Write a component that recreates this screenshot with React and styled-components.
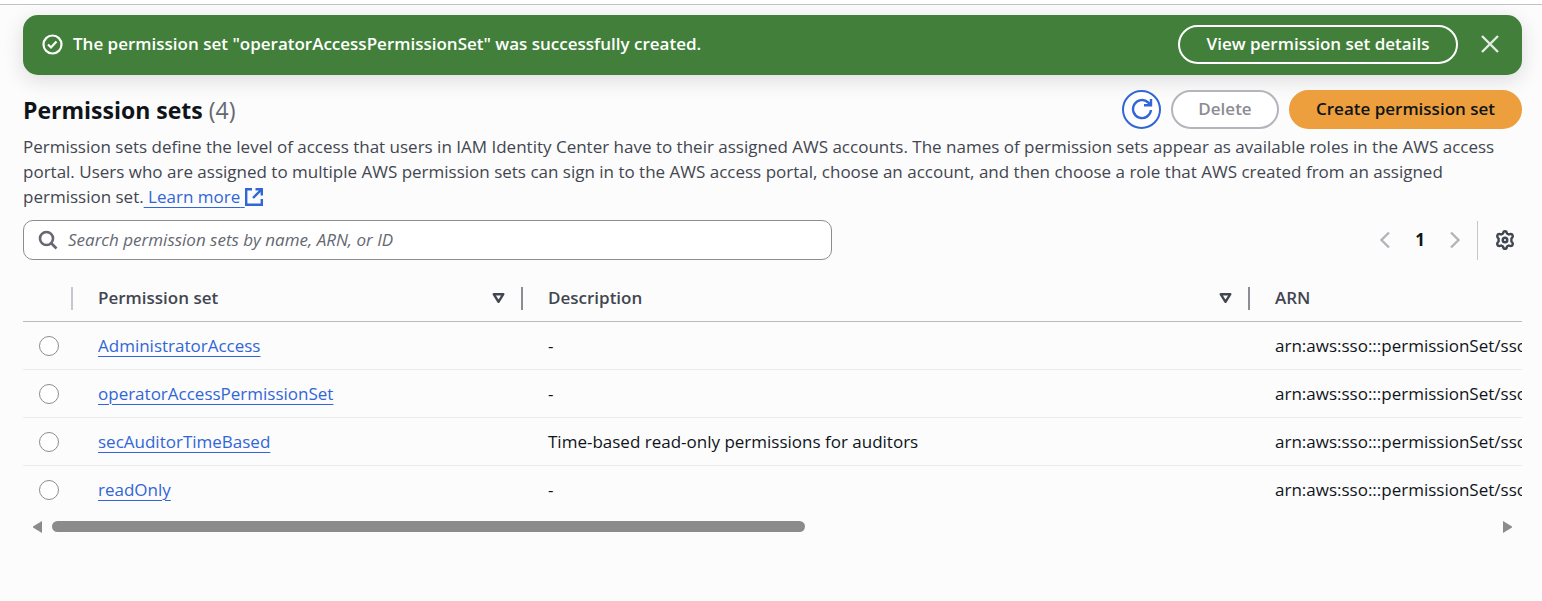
import React, { useState } from "react";
import styled, { createGlobalStyle } from "styled-components";

const GlobalStyle = createGlobalStyle`
  *, *::before, *::after { box-sizing: border-box; }
  body {
    margin: 0;
    background: #fcfcfc;
    color: #0f141a;
    font: 400 17px/24px "Open Sans", "Noto Sans", sans-serif;
  }
  button, input { font: inherit; }
`;

const TopEdge = styled.div`
  height: 5px;
  background: #ffffff;
  border-bottom: 1px solid #c2c2ca;
`;

const Page = styled.main`
  padding: 10px 20px 24px 23px;
`;

const Flashbar = styled.section`
  display: flex;
  align-items: center;
  gap: 10px;
  height: 60px;
  padding: 0 19px 2px;
  border-radius: 15px;
  background: #427f3a;
  color: #ffffff;
  font-weight: 600;
  box-shadow: 0 5px 20px 1px rgba(0, 7, 22, 0.12);
`;

const FlashText = styled.p`
  flex: 1;
  margin: 0;
`;

const Button = styled.button`
  height: 39px;
  width: ${(p) => p.$width}px;
  padding: 0 0 1px;
  border: 2px solid ${(p) => p.$border};
  border-radius: 20px;
  background: ${(p) => p.$fill || "transparent"};
  color: ${(p) => p.$color};
  font-weight: 600;
  line-height: 24px;
  white-space: nowrap;
  display: flex;
  align-items: center;
  justify-content: center;
`;

const IconButton = styled.button`
  display: flex;
  align-items: center;
  justify-content: center;
  width: ${(p) => p.$width || 26}px;
  height: 26px;
  padding: 0;
  border: 0;
  background: transparent;
  color: ${(p) => p.$color};
`;

const CloseSlot = styled.div`
  padding-left: 9px;
`;

const Header = styled.header`
  display: flex;
  align-items: center;
  justify-content: space-between;
  margin-top: 15px;
`;

const Title = styled.h2`
  margin: 0;
  font-size: 23px;
  line-height: 30px;
  font-weight: 700;
`;

const Counter = styled.span`
  color: #656871;
  font-weight: 400;
`;

const Actions = styled.div`
  display: flex;
  gap: 10px;
`;

const Description = styled.p`
  margin: 5px 0 0;
  line-height: 25px;
  color: #424650;
`;

const Link = styled.a`
  color: #3166d6;
  text-decoration: underline;
  text-decoration-thickness: 1px;
  text-underline-offset: 4px;
`;

const ExternalIcon = styled.svg`
  vertical-align: -3px;
`;

const Toolbar = styled.div`
  display: flex;
  align-items: center;
  justify-content: space-between;
  margin-top: 11px;
`;

const SearchBox = styled.label`
  display: flex;
  align-items: center;
  gap: 10px;
  width: 54%;
  height: 40px;
  padding: 0 14px;
  border: 1px solid #8c8c94;
  border-radius: 10px;
  background: #ffffff;
  color: #656871;
`;

const SearchInput = styled.input`
  flex: 1;
  min-width: 0;
  padding: 0;
  border: 0;
  outline: 0;
  background: transparent;
  &::placeholder {
    color: #656871;
    font-style: italic;
    opacity: 1;
  }
`;

const Paging = styled.div`
  display: flex;
  align-items: center;
  height: 39px;
`;

const PageNumber = styled.button`
  width: 44px;
  padding: 0;
  border: 0;
  background: transparent;
  color: #0f141a;
  font-weight: 700;
`;

const Preferences = styled.div`
  display: flex;
  align-items: center;
  height: 39px;
  margin-left: 9px;
  padding: 0 4px 0 14px;
  border-left: 1px solid #c6c6cd;
`;

const TableScroll = styled.div`
  margin-top: 15px;
  overflow-x: auto;
  scrollbar-width: none;
`;

const Table = styled.table`
  width: 2890px;
  table-layout: fixed;
  border-collapse: separate;
  border-spacing: 0;
`;

const Col = styled.col`
  width: ${(p) => p.$width}px;
`;

const HeadCell = styled.th`
  height: 47px;
  padding: 0;
  border-bottom: 1px solid #b9bac0;
  color: #424650;
  font-weight: 600;
  text-align: left;
`;

const HeadContent = styled.div`
  display: flex;
  align-items: center;
  justify-content: space-between;
  height: 23px;
  padding: 0 15px 0 25px;
  border-right: ${(p) => (p.$divider ? "2px solid " + p.$divider : "0")};
`;

const SortButton = styled(IconButton)`
  width: 15px;
  height: 23px;
`;

const Cell = styled.td`
  height: 48px;
  padding: 0 ${(p) => (p.$select ? 16 : 25)}px;
  border-bottom: 1px solid #ebebf0;
  white-space: nowrap;
  tr:last-child > & { border-bottom-color: transparent; }
`;

const Radio = styled.input`
  display: block;
  appearance: none;
  width: 20px;
  height: 20px;
  margin: 0;
  border: 1px solid #8c8c94;
  border-radius: 50%;
  background: #ffffff;
  &:checked { border: 6px solid #3166d6; }
`;

const ScrollTrack = styled.div`
  display: flex;
  align-items: center;
  height: 11px;
  margin-top: 7px;
  padding: 0 9px 0 10px;
`;

const Rail = styled.div`
  flex: 1;
  padding: 0 2px 0 9px;
`;

const Thumb = styled.div`
  width: 52%;
  height: 11px;
  border-radius: 6px;
  background: #8b8b8b;
`;

const rows = [
  { name: "AdministratorAccess", description: "-" },
  { name: "operatorAccessPermissionSet", description: "-" },
  { name: "secAuditorTimeBased", description: "Time-based read-only permissions for auditors" },
  { name: "readOnly", description: "-" },
];

function SortIcon() {
  return (
    <svg width="13" height="12" viewBox="0 0 13 12" fill="none" stroke="currentColor" strokeWidth="2.400" strokeLinejoin="round" aria-hidden="true">
      <path d="M1.700 2.200h9.600L6.500 9.800Z" />
    </svg>
  );
}

function Chevron({ d }) {
  return (
    <svg width="20" height="20" viewBox="0 0 20 20" fill="none" stroke="currentColor" strokeWidth="2.4" aria-hidden="true">
      <path d={d} />
    </svg>
  );
}

export default function App() {
  const [query, setQuery] = useState("");
  const [selected, setSelected] = useState(null);
  return (
    <>
      <GlobalStyle />
      <TopEdge />
      <Page>
        <Flashbar role="status">
          <svg width="21" height="21" viewBox="0 0 21 21" fill="none" stroke="currentColor" strokeWidth="2.200" aria-hidden="true">
            <circle cx="10.500" cy="10.500" r="9" />
            <path d="m6 10.500 3 3 5.500-6" />
          </svg>
          <FlashText>The permission set "operatorAccessPermissionSet" was successfully created.</FlashText>
          <Button type="button" $width={280} $border="#ffffff" $color="#ffffff">View permission set details</Button>
          <CloseSlot>
            <IconButton type="button" $color="#e3ebe2" aria-label="Dismiss">
              <svg width="18" height="18" viewBox="0 0 18 18" fill="none" stroke="currentColor" strokeWidth="2.400" aria-hidden="true">
                <path d="m1 1 16 16M17 1 1 17" />
              </svg>
            </IconButton>
          </CloseSlot>
        </Flashbar>

        <Header>
          <Title>Permission sets <Counter>(4)</Counter></Title>
          <Actions>
            <Button type="button" $width={39} $border="#3166d6" $color="#3166d6" $fill="#ffffff" aria-label="Refresh">
              <svg width="22" height="22" viewBox="0 0 22 22" fill="none" stroke="currentColor" strokeWidth="2.400" aria-hidden="true">
                <path d="M20 12a9 9 0 1 1-2.800-7.500L20 7" />
                <path d="M20 1v6.300h-7" />
              </svg>
            </Button>
            <Button type="button" disabled $width={108} $border="#b4b4bb" $color="#8c8c94" $fill="#ffffff">Delete</Button>
            <Button type="button" $width={233} $border="#ec9f3c" $color="#0f141a" $fill="#ec9f3c">Create permission set</Button>
          </Actions>
        </Header>

        <Description>
          Permission sets define the level of access that users in IAM Identity Center have to their assigned AWS accounts. The names of permission sets appear as available roles in the AWS access portal. Users who are assigned to multiple AWS permission sets can sign in to the AWS access portal, choose an account, and then choose a role that AWS created from an assigned permission set.
          <Link href="#learn-more">
            {" "}Learn more{" "}
            <ExternalIcon width="18" height="18" viewBox="0 0 18 18" fill="none" stroke="currentColor" strokeWidth="2.400" aria-label="Opens in a new tab">
              <path d="M7 1.200H1.200v15.600h15.600V11M10.500 1.200h6.300v6.300M16.500 1.500 8 10" />
            </ExternalIcon>
          </Link>
        </Description>

        <Toolbar>
          <SearchBox>
            <svg width="20" height="20" viewBox="0 0 20 20" fill="none" stroke="currentColor" strokeWidth="2.600" aria-hidden="true">
              <circle cx="8.500" cy="8.500" r="6.500" />
              <path d="m13 13 5.500 5.500" />
            </svg>
            <SearchInput
              type="text"
              aria-label="Search permission sets"
              placeholder="Search permission sets by name, ARN, or ID"
              value={query}
              onChange={(e) => setQuery(e.target.value)}
            />
          </SearchBox>
          <Paging>
            <IconButton type="button" $color="#b4b4bb" aria-label="Previous page"><Chevron d="M14 2.500 6.500 10l7.500 7.500" /></IconButton>
            <PageNumber type="button" aria-current="page">1</PageNumber>
            <IconButton type="button" $color="#b4b4bb" aria-label="Next page"><Chevron d="M6 2.500 13.500 10 6 17.500" /></IconButton>
            <Preferences>
              <IconButton type="button" $color="#424650" aria-label="Preferences">
                <svg width="20" height="20" viewBox="0 0 20 20" fill="none" stroke="currentColor" strokeWidth="2.400" strokeLinejoin="round" aria-hidden="true">
                  <path d="M8 3.500Q8.300 1.200 10 1.200T12 3.500L13.800 4.500Q16 3.500 17.200 4.500Q18.600 7 16.400 8.500V11.500Q18.600 13 17.200 15.500Q16 16.500 13.800 15.500L12 16.500Q11.700 18.800 10 18.800T8 16.500L6.200 15.500Q4 16.500 2.800 15.500Q1.400 13 3.600 11.500V8.500Q1.400 7 2.800 4.500Q4 3.500 6.200 4.500Z" />
                  <circle cx="10" cy="10" r="2.300" />
                </svg>
              </IconButton>
            </Preferences>
          </Paging>
        </Toolbar>

        <TableScroll>
          <Table>
            <colgroup>
              <Col $width={50} />
              <Col $width={450} />
              <Col $width={727} />
              <col />
            </colgroup>
            <thead>
              <tr>
                <HeadCell scope="col" aria-label="Selection"><HeadContent $divider="#c6c6cd" /></HeadCell>
                <HeadCell scope="col">
                  <HeadContent $divider="#8c8c94">
                    Permission set
                    <SortButton type="button" $color="#424650" aria-label="Sort by permission set"><SortIcon /></SortButton>
                  </HeadContent>
                </HeadCell>
                <HeadCell scope="col">
                  <HeadContent $divider="#8c8c94">
                    Description
                    <SortButton type="button" $color="#424650" aria-label="Sort by description"><SortIcon /></SortButton>
                  </HeadContent>
                </HeadCell>
                <HeadCell scope="col"><HeadContent>ARN</HeadContent></HeadCell>
              </tr>
            </thead>
            <tbody>
              {rows.map((row) => (
                <tr key={row.name}>
                  <Cell $select>
                    <Radio
                      type="radio"
                      name="permission-set"
                      aria-label={row.name}
                      checked={selected === row.name}
                      onChange={() => setSelected(row.name)}
                    />
                  </Cell>
                  <Cell><Link href={"#" + row.name}>{row.name}</Link></Cell>
                  <Cell>{row.description}</Cell>
                  <Cell>arn:aws:sso:::permissionSet/sso</Cell>
                </tr>
              ))}
            </tbody>
          </Table>
        </TableScroll>

        <ScrollTrack aria-hidden="true">
          <svg width="10" height="12" viewBox="0 0 10 12" fill="#8b8b8b"><path d="M9 0v12L0 6.500v-1Z" /></svg>
          <Rail><Thumb /></Rail>
          <svg width="10" height="12" viewBox="0 0 10 12" fill="#8b8b8b"><path d="M0 0v12l9-5.500v-1Z" /></svg>
        </ScrollTrack>
      </Page>
    </>
  );
}
